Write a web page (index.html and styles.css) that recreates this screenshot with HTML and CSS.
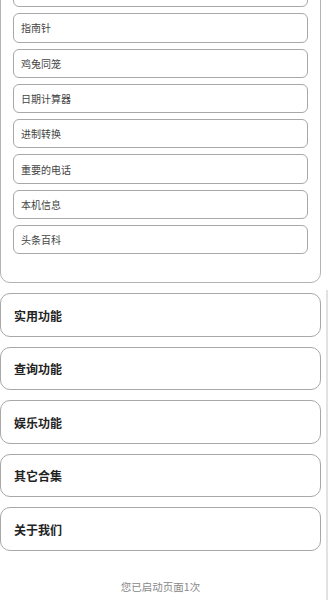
FILE: index.html
```html
<!DOCTYPE html>
<html>
<head>
  <meta charset="utf-8">
  <link rel="stylesheet" href="styles.css">
</head>
<body>
  <div class="panel">
    <div class="item"></div>
    <div class="item">指南针</div>
    <div class="item">鸡兔同笼</div>
    <div class="item">日期计算器</div>
    <div class="item">进制转换</div>
    <div class="item">重要的电话</div>
    <div class="item">本机信息</div>
    <div class="item">头条百科</div>
  </div>

  <div class="card">实用功能</div>
  <div class="card">查询功能</div>
  <div class="card">娱乐功能</div>
  <div class="card">其它合集</div>
  <div class="card">关于我们</div>

  <div class="footer">您已启动页面1次</div>

  <div class="scroll-thumb"></div>
</body>
</html>
```

FILE: styles.css
```css
body {
  margin: 0;
  padding: 0;
  width: 330px;
  height: 600px;
  overflow: hidden;
  background: #fff;
  font-family: "Noto Sans CJK SC", "Noto Sans", sans-serif;
  position: relative;
}

.panel {
  width: 321px;
  box-sizing: border-box;
  margin-top: -33px;
  padding: 10px 12px 28px;
  border: 1px solid #b4b4b4;
  border-radius: 10px;
  display: flex;
  flex-direction: column;
  gap: 6px;
}

.item {
  height: 29.3px;
  box-sizing: border-box;
  border: 1px solid #a8a8a8;
  border-radius: 6px;
  padding: 0 7px;
  display: flex;
  align-items: center;
  font-size: 10px;
  color: #444;
}

.card {
  width: 321px;
  height: 43.5px;
  box-sizing: border-box;
  margin-top: 10px;
  border: 1px solid #a8a8a8;
  border-radius: 10px;
  padding: 0 13px;
  display: flex;
  align-items: center;
  font-size: 12px;
  font-weight: bold;
  color: #222;
}

.footer {
  padding-top: 28px;
  text-align: center;
  font-size: 10.5px;
  color: #888;
  padding-right: 9px;
}

.scroll-thumb {
  position: absolute;
  right: 2px;
  top: 290px;
  bottom: 0;
  width: 2px;
  background: #e2e2e2;
}
```
